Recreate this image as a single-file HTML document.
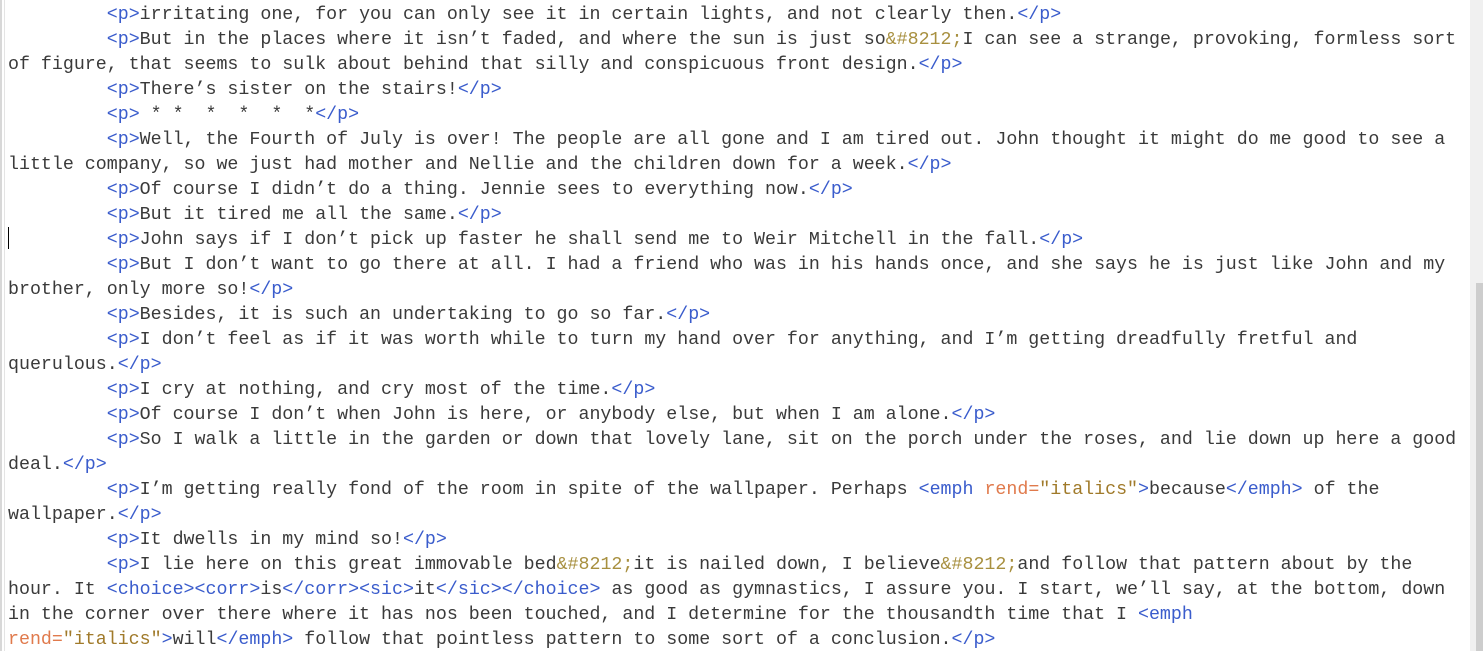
<!DOCTYPE html>
<html><head><meta charset="utf-8"><style>
html,body{margin:0;padding:0;background:#fff;width:1483px;height:651px;overflow:hidden;position:relative}
.lb{position:absolute;left:0;top:0;width:2px;height:651px;background:#d8d8d8}
.lb2{position:absolute;left:4px;top:0;width:1px;height:651px;background:#e4e4e4}
.track{position:absolute;left:1470px;top:0;width:13px;height:651px;background:#f0f0f0}
.thumb{position:absolute;left:1476px;top:283px;width:7px;height:368px;background:#cdcdcd}
pre{position:absolute;left:8px;top:3px;margin:0;font-family:"Courier New","Liberation Mono",monospace;font-size:18.3px;line-height:25px;color:#3a3a3a}
.t{color:#3a5ccc}.a{color:#e07a4c}.v{color:#a07a2a}.e{color:#a89040}
.cur{position:absolute;left:8px;top:227px;width:1px;height:22px;background:#000}
</style></head><body>
<div class="lb"></div><div class="lb2"></div>
<div class="cur"></div>
<pre>         <span class="t">&lt;p&gt;</span>irritating one, for you can only see it in certain lights, and not clearly then.<span class="t">&lt;/p&gt;</span>
         <span class="t">&lt;p&gt;</span>But in the places where it isn’t faded, and where the sun is just so<span class="e">&amp;#8212;</span>I can see a strange, provoking, formless sort
of figure, that seems to sulk about behind that silly and conspicuous front design.<span class="t">&lt;/p&gt;</span>
         <span class="t">&lt;p&gt;</span>There’s sister on the stairs!<span class="t">&lt;/p&gt;</span>
         <span class="t">&lt;p&gt;</span> * *  *  *  *  *<span class="t">&lt;/p&gt;</span>
         <span class="t">&lt;p&gt;</span>Well, the Fourth of July is over! The people are all gone and I am tired out. John thought it might do me good to see a
little company, so we just had mother and Nellie and the children down for a week.<span class="t">&lt;/p&gt;</span>
         <span class="t">&lt;p&gt;</span>Of course I didn’t do a thing. Jennie sees to everything now.<span class="t">&lt;/p&gt;</span>
         <span class="t">&lt;p&gt;</span>But it tired me all the same.<span class="t">&lt;/p&gt;</span>
         <span class="t">&lt;p&gt;</span>John says if I don’t pick up faster he shall send me to Weir Mitchell in the fall.<span class="t">&lt;/p&gt;</span>
         <span class="t">&lt;p&gt;</span>But I don’t want to go there at all. I had a friend who was in his hands once, and she says he is just like John and my
brother, only more so!<span class="t">&lt;/p&gt;</span>
         <span class="t">&lt;p&gt;</span>Besides, it is such an undertaking to go so far.<span class="t">&lt;/p&gt;</span>
         <span class="t">&lt;p&gt;</span>I don’t feel as if it was worth while to turn my hand over for anything, and I’m getting dreadfully fretful and
querulous.<span class="t">&lt;/p&gt;</span>
         <span class="t">&lt;p&gt;</span>I cry at nothing, and cry most of the time.<span class="t">&lt;/p&gt;</span>
         <span class="t">&lt;p&gt;</span>Of course I don’t when John is here, or anybody else, but when I am alone.<span class="t">&lt;/p&gt;</span>
         <span class="t">&lt;p&gt;</span>So I walk a little in the garden or down that lovely lane, sit on the porch under the roses, and lie down up here a good
deal.<span class="t">&lt;/p&gt;</span>
         <span class="t">&lt;p&gt;</span>I’m getting really fond of the room in spite of the wallpaper. Perhaps <span class="t">&lt;emph</span> <span class="a">rend=</span><span class="v">"italics"</span><span class="t">&gt;</span>because<span class="t">&lt;/emph&gt;</span> of the
wallpaper.<span class="t">&lt;/p&gt;</span>
         <span class="t">&lt;p&gt;</span>It dwells in my mind so!<span class="t">&lt;/p&gt;</span>
         <span class="t">&lt;p&gt;</span>I lie here on this great immovable bed<span class="e">&amp;#8212;</span>it is nailed down, I believe<span class="e">&amp;#8212;</span>and follow that pattern about by the
hour. It <span class="t">&lt;choice&gt;&lt;corr&gt;</span>is<span class="t">&lt;/corr&gt;&lt;sic&gt;</span>it<span class="t">&lt;/sic&gt;&lt;/choice&gt;</span> as good as gymnastics, I assure you. I start, we’ll say, at the bottom, down
in the corner over there where it has nos been touched, and I determine for the thousandth time that I <span class="t">&lt;emph</span>
<span class="a">rend=</span><span class="v">"italics"</span><span class="t">&gt;</span>will<span class="t">&lt;/emph&gt;</span> follow that pointless pattern to some sort of a conclusion.<span class="t">&lt;/p&gt;</span></pre>
<div class="track"></div><div class="thumb"></div>
</body></html>
